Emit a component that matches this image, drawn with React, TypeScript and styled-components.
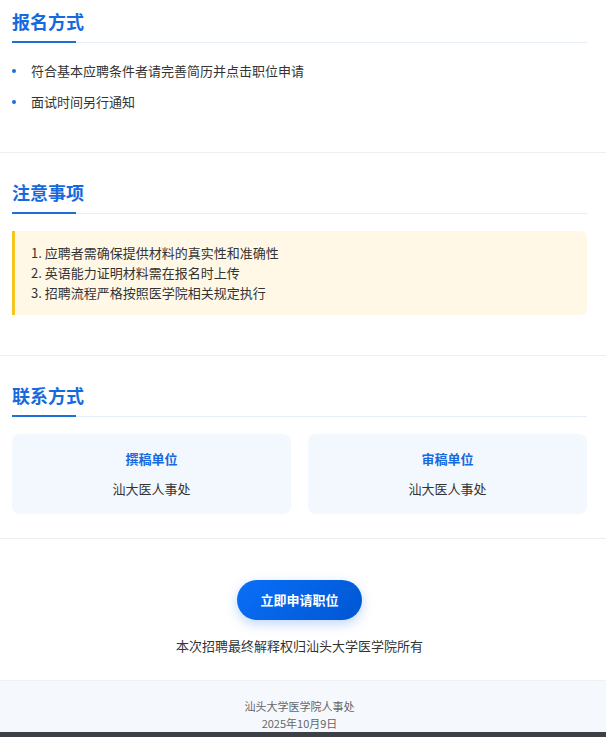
import React from "react";
import styled, { createGlobalStyle } from "styled-components";

const Global = createGlobalStyle`
  html, body { margin: 0; padding: 0; background: #ffffff; }
  body {
    font-family: "Noto Sans CJK SC", "Noto Sans", "Liberation Sans", sans-serif;
    color: #333333;
    -webkit-font-smoothing: antialiased;
  }
  * { box-sizing: border-box; }
`;

const Page = styled.div`
  width: 100%;
  display: flex;
  flex-direction: column;
`;

const Section = styled.section`
  padding: 26px 19px 24px 12px;
  border-bottom: 1px solid #eceff3;
  &:first-child {
    padding-top: 8px;
  }
`;

const Heading = styled.h2`
  position: relative;
  margin: 0;
  padding-bottom: 7px;
  font-size: 18px;
  line-height: 27px;
  font-weight: 700;
  color: #1769de;
  border-bottom: 1px solid #e6eef8;
  &::after {
    content: "";
    position: absolute;
    left: 0;
    bottom: -1px;
    width: 64px;
    height: 2px;
    background: #1a6fd8;
  }
`;

const BulletList = styled.ul`
  list-style: none;
  margin: 17px 0 16px;
  padding: 0;
  display: flex;
  flex-direction: column;
  gap: 10px;
`;

const BulletItem = styled.li`
  position: relative;
  padding-left: 19px;
  font-size: 13px;
  line-height: 21px;
  color: #333333;
  &::before {
    content: "";
    position: absolute;
    left: 0;
    top: 9px;
    width: 4px;
    height: 4px;
    border-radius: 50%;
    background: #1a6fd8;
  }
`;

const Notice = styled.div`
  margin: 17px 0 16px;
  padding: 12px 16px;
  background: #fff8e7;
  border-left: 3px solid #f6c520;
  border-radius: 0 6px 6px 0;
  display: flex;
  flex-direction: column;
`;

const NoticeLine = styled.div`
  font-size: 13px;
  line-height: 20px;
  color: #333333;
`;

const CardGrid = styled.div`
  margin-top: 17px;
  display: grid;
  grid-template-columns: 1fr 1fr;
  gap: 17px;
`;

const Card = styled.div`
  background: #f3f8fe;
  border-radius: 8px;
  padding: 15px 12px;
  display: flex;
  flex-direction: column;
  align-items: center;
  gap: 10px;
`;

const CardTitle = styled.div`
  font-size: 13px;
  line-height: 20px;
  font-weight: 700;
  color: #1769de;
`;

const CardValue = styled.div`
  font-size: 13px;
  line-height: 20px;
  color: #333333;
`;

const CtaSection = styled.section`
  padding: 41px 19px 24px 12px;
  display: flex;
  flex-direction: column;
  align-items: center;
  gap: 16px;
`;

const ApplyButton = styled.button`
  border: none;
  cursor: pointer;
  height: 40px;
  padding: 0 23px;
  border-radius: 20px;
  font-family: inherit;
  font-size: 13px;
  font-weight: 700;
  line-height: 20px;
  color: #ffffff;
  background: linear-gradient(135deg, #0a6ff8 0%, #0056d2 100%);
  box-shadow: 0 4px 12px rgba(20, 110, 240, 0.28);
`;

const Disclaimer = styled.div`
  font-size: 13px;
  line-height: 20px;
  color: #333333;
`;

const Footer = styled.footer`
  background: #f5f9fd;
  border-top: 1px solid #eef2f6;
  padding: 17px 19px 0 12px;
  display: flex;
  flex-direction: column;
  align-items: center;
`;

const FooterLine = styled.div`
  font-size: 11px;
  line-height: 17px;
  color: #666666;
`;

const BottomBar = styled.div`
  height: 24px;
  background: #3d4146;
`;

export default function App() {
  return (
    <>
      <Global />
      <Page>
        <Section>
          <Heading>报名方式</Heading>
          <BulletList>
            <BulletItem>符合基本应聘条件者请完善简历并点击职位申请</BulletItem>
            <BulletItem>面试时间另行通知</BulletItem>
          </BulletList>
        </Section>

        <Section>
          <Heading>注意事项</Heading>
          <Notice>
            <NoticeLine>1. 应聘者需确保提供材料的真实性和准确性</NoticeLine>
            <NoticeLine>2. 英语能力证明材料需在报名时上传</NoticeLine>
            <NoticeLine>3. 招聘流程严格按照医学院相关规定执行</NoticeLine>
          </Notice>
        </Section>

        <Section>
          <Heading>联系方式</Heading>
          <CardGrid>
            <Card>
              <CardTitle>撰稿单位</CardTitle>
              <CardValue>汕大医人事处</CardValue>
            </Card>
            <Card>
              <CardTitle>审稿单位</CardTitle>
              <CardValue>汕大医人事处</CardValue>
            </Card>
          </CardGrid>
        </Section>

        <CtaSection>
          <ApplyButton type="button">立即申请职位</ApplyButton>
          <Disclaimer>本次招聘最终解释权归汕头大学医学院所有</Disclaimer>
        </CtaSection>

        <Footer>
          <FooterLine>汕头大学医学院人事处</FooterLine>
          <FooterLine>2025年10月9日</FooterLine>
        </Footer>
        <BottomBar />
      </Page>
    </>
  );
}
